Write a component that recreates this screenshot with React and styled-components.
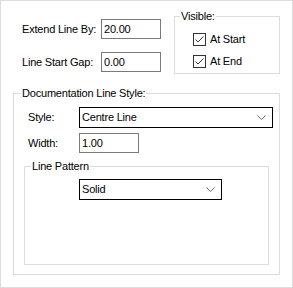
import React from "react";
import styled, { createGlobalStyle } from "styled-components";

const Global = createGlobalStyle`
  html, body { margin: 0; padding: 0; background: #fff; }
  body {
    font-family: "Liberation Sans", Arial, sans-serif;
    font-size: 11px;
    letter-spacing: -0.2px;
    color: #000;
  }
  * { box-sizing: border-box; }
`;

const Panel = styled.div`
  width: 293px;
  height: 288px;
  border: 1px solid #dcdcdc;
  background: #fff;
  display: flex;
  flex-direction: column;
`;

const TopSection = styled.div`
  display: flex;
  align-items: flex-start;
  gap: 13px;
  padding-left: 21px;
`;

const Fields = styled.div`
  display: flex;
  flex-direction: column;
  gap: 13px;
  padding-top: 18px;
`;

const Row = styled.div`
  display: flex;
  align-items: center;
  padding-left: ${(p) => p.$indent || 0}px;
`;

const Label = styled.span`
  width: ${(p) => p.$w}px;
  line-height: 13px;
  white-space: nowrap;
`;

const TextBox = styled.input`
  width: ${(p) => p.$w || 60}px;
  height: 20px;
  border: 1px solid #7a7a7a;
  padding: 0 0 0 2px;
  font: inherit;
  letter-spacing: inherit;
  color: #000;
  background: #fff;
  outline: none;
`;

const Group = styled.fieldset`
  margin: ${(p) => p.$margin};
  padding: 0;
  border: 1px solid #dcdcdc;
  width: ${(p) => p.$w}px;
  height: ${(p) => p.$h}px;
  min-width: 0;
`;

const Legend = styled.legend`
  margin-left: ${(p) => p.$offset}px;
  padding: 0 1px;
  line-height: 13px;
  height: 13px;
`;

const CheckList = styled.div`
  display: flex;
  flex-direction: column;
  gap: 9px;
  padding: 10px 0 0 18px;
`;

const CheckRow = styled.label`
  display: flex;
  align-items: center;
  gap: 4px;
  line-height: 13px;
`;

const CheckBox = styled.span`
  width: 13px;
  height: 13px;
  border: 1px solid #333;
  background: #fff;
  display: flex;
  align-items: center;
  justify-content: center;
`;

const DocContent = styled.div`
  display: flex;
  flex-direction: column;
  padding: 7px 0 0 10px;
`;

const Rows = styled.div`
  display: flex;
  flex-direction: column;
  gap: 5px;
`;

const Combo = styled.div`
  width: ${(p) => p.$w}px;
  height: 21px;
  border: 1px solid #000;
  background: #fff;
  display: flex;
  align-items: center;
  justify-content: space-between;
  padding: 0 6px 0 2px;
  line-height: 13px;
`;

const PatternContent = styled.div`
  padding: 6px 0 0 54px;
`;

const Check = () => (
  <CheckBox>
    <svg width="11" height="11" viewBox="0 0 11 11">
      <path d="M1.5 5.5 L4 8 L9.5 2.5" fill="none" stroke="#333" strokeWidth="1" />
    </svg>
  </CheckBox>
);

const Chevron = () => (
  <svg width="9" height="6" viewBox="0 0 9 6">
    <path d="M0.5 0.5 L4.5 4.5 L8.5 0.5" fill="none" stroke="#707070" strokeWidth="1" />
  </svg>
);

export default function App() {
  return (
    <>
      <Global />
      <Panel>
        <TopSection>
          <Fields>
            <Row>
              <Label $w={79}>Extend Line By:</Label>
              <TextBox readOnly defaultValue="20.00" />
            </Row>
            <Row>
              <Label $w={79}>Line Start Gap:</Label>
              <TextBox readOnly defaultValue="0.00" />
            </Row>
          </Fields>
          <Group $w={106} $h={64} $margin="9px 0 0 0">
            <Legend $offset={5}>Visible:</Legend>
            <CheckList>
              <CheckRow>
                <Check />
                At Start
              </CheckRow>
              <CheckRow>
                <Check />
                At End
              </CheckRow>
            </CheckList>
          </Group>
        </TopSection>
        <Group $w={267} $h={188} $margin="13px 0 0 12px">
          <Legend $offset={7}>Documentation Line Style:</Legend>
          <DocContent>
            <Rows>
              <Row $indent={4}>
                <Label $w={51}>Style:</Label>
                <Combo $w={194}>
                  <span>Centre Line</span>
                  <Chevron />
                </Combo>
              </Row>
              <Row $indent={4}>
                <Label $w={51}>Width:</Label>
                <TextBox readOnly defaultValue="1.00" />
              </Row>
            </Rows>
            <Group $w={245} $h={105} $margin="7px 0 0 0">
              <Legend $offset={6}>Line Pattern</Legend>
              <PatternContent>
                <Combo $w={143}>
                  <span>Solid</span>
                  <Chevron />
                </Combo>
              </PatternContent>
            </Group>
          </DocContent>
        </Group>
      </Panel>
    </>
  );
}
